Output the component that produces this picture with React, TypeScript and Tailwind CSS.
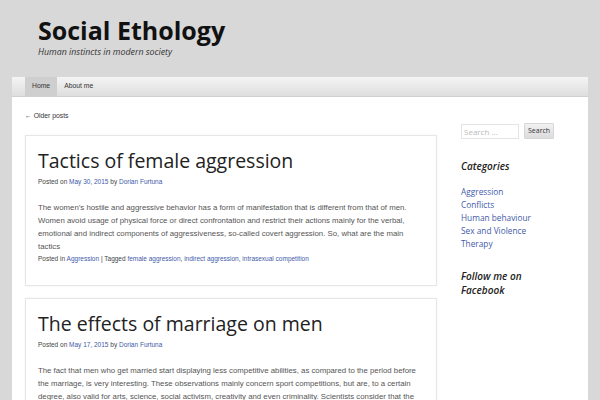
import React from "react";

const link = "text-[#3f5ba9]";

function Post({ title, date, body, footer }: { title: string; date: string; body: string; footer?: boolean }) {
  return (
    <div className="border border-[#e6e6e6] bg-white px-[12px] pt-[11px] pb-[21px] shadow-[0_0_2px_rgba(0,0,0,0.06)]">
      <h1 className="font-['Open_Sans',sans-serif] text-[19.5px] leading-[28px] text-[#222]">{title}</h1>
      <div className="mt-[2px] font-['Liberation_Sans',sans-serif] text-[6.5px] leading-[10px] text-[#444]">
        Posted on <span className={link}>{date}</span> by <span className={link}>Dorian Furtuna</span>
      </div>
      <p className="mt-[14px] font-['Liberation_Sans',sans-serif] text-[7.8px] leading-[13px] text-[#555]">{body}</p>
      {footer && (
        <div className="mt-[1px] font-['Liberation_Sans',sans-serif] text-[6.5px] leading-[10px] text-[#444]">
          Posted in <span className={link}>Aggression</span> | Tagged{" "}
          <span className={link}>female aggression</span>, <span className={link}>indirect aggression</span>,{" "}
          <span className={link}>intrasexual competition</span>
        </div>
      )}
    </div>
  );
}

export default function App() {
  return (
    <div className="h-[400px] w-[600px] overflow-hidden bg-[#d8d8d8]">
      <header className="px-[38px] pt-[14px] h-[77px]">
        <div className="font-['Open_Sans',sans-serif] font-bold text-[25px] leading-[32px] text-[#111]">Social Ethology</div>
        <div className="font-['Open_Sans',sans-serif] italic text-[8.8px] leading-[12px] text-[#333]">Human instincts in modern society</div>
      </header>
      <div className="mx-[12px] bg-white h-[323px]">
        <nav className="flex h-[20px] items-stretch bg-gradient-to-b from-[#f4f4f4] to-[#dedede] border-b border-[#d0d0d0] pl-[13px] font-['Liberation_Sans',sans-serif] text-[6.8px] text-[#333]">
          <div className="flex items-center bg-[#cfcfcf] px-[7px]">Home</div>
          <div className="flex items-center px-[7px]">About me</div>
        </nav>
        <div className="flex">
          <main className="ml-[13px] w-[412px]">
            <div className="pt-[14px] h-[38px] font-['Liberation_Sans',sans-serif] text-[6.8px] leading-[10px] text-[#333]">← Older posts</div>
            <Post
              title="Tactics of female aggression"
              date="May 30, 2015"
              footer
              body="The women’s hostile and aggressive behavior has a form of manifestation that is different from that of men. Women avoid usage of physical force or direct confrontation and restrict their actions mainly for the verbal, emotional and indirect components of aggressiveness, so-called covert aggression. So, what are the main tactics"
            />
            <div className="h-[12px]" />
            <Post
              title="The effects of marriage on men"
              date="May 17, 2015"
              body="The fact that men who get married start displaying less competitive abilities, as compared to the period before the marriage, is very interesting. These observations mainly concern sport competitions, but are, to a certain degree, also valid for arts, science, social activism, creativity and even criminality. Scientists consider that the"
            />
          </main>
          <aside className="ml-[24px] w-[110px] pt-[26px] font-['Open_Sans',sans-serif]">
            <div className="flex items-center gap-[5px]">
              <div className="h-[15px] w-[58px] border border-[#e4e4e4] px-[2px] text-[8px] leading-[13px] text-[#bbb]">Search …</div>
              <div className="flex h-[16px] items-center rounded-[1px] bg-gradient-to-b from-[#f2f2f2] to-[#dcdcdc] px-[3px] text-[7px] text-[#333] border border-[#d6d6d6]">Search</div>
            </div>
            <div className="mt-[20px] font-semibold italic text-[10px] leading-[14px] text-[#222]">Categories</div>
            <ul className={`mt-[12px] text-[8.3px] leading-[13px] ${link}`}>
              <li>Aggression</li>
              <li>Conflicts</li>
              <li>Human behaviour</li>
              <li>Sex and Violence</li>
              <li>Therapy</li>
            </ul>
            <div className="mt-[19px] w-[80px] font-semibold italic text-[10px] leading-[14px] text-[#222]">Follow me on Facebook</div>
          </aside>
        </div>
      </div>
    </div>
  );
}
